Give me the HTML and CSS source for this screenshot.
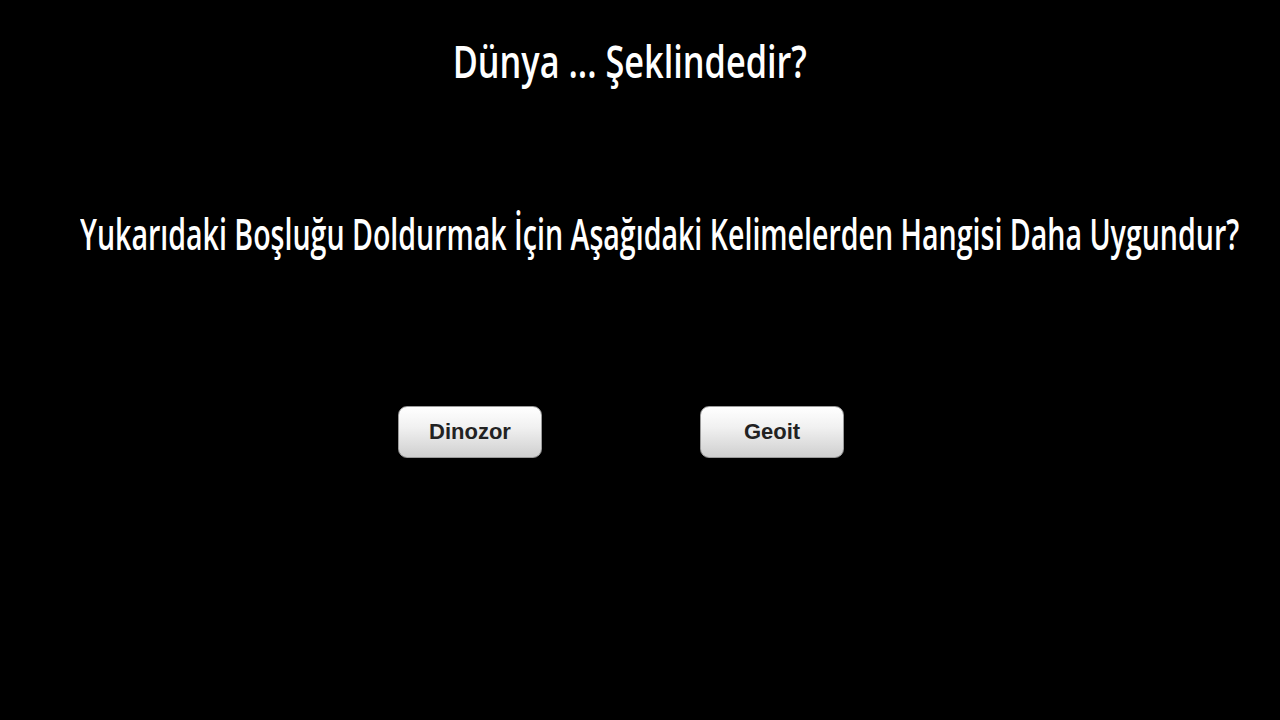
FILE: index.html
```html
<!DOCTYPE html>
<html lang="tr">
<head>
<meta charset="utf-8">
<title>Quiz</title>
<link rel="stylesheet" href="styles.css">
</head>
<body>
<main class="screen">
  <h1 class="title"><span class="title-text">Dünya ... Şeklindedir?</span></h1>
  <p class="question"><span class="question-text">Yukarıdaki Boşluğu Doldurmak İçin Aşağıdaki Kelimelerden Hangisi Daha Uygundur?</span></p>
  <div class="answers">
    <button class="answer">Dinozor</button>
    <button class="answer">Geoit</button>
  </div>
</main>
</body>
</html>
```
FILE: styles.css
```css
html, body {
  margin: 0;
  padding: 0;
  background: #000;
}
.screen {
  width: 1280px;
  height: 720px;
  display: flex;
  flex-direction: column;
  color: #fff;
  overflow: hidden;
}
.title {
  margin: 0;
  padding-top: 30px;
  height: 60px;
  display: flex;
  justify-content: center;
  padding-right: 21px;
  font-family: "Open Sans", sans-serif;
  font-weight: 600;
  font-size: 46px;
  line-height: 60px;
}
.title-text {
  display: inline-block;
  transform: scaleX(0.745);
  transform-origin: center;
  white-space: nowrap;
}
.question {
  margin: 0;
  margin-top: 113px;
  height: 60px;
  padding-left: 80px;
  font-family: "Open Sans", sans-serif;
  font-weight: 600;
  font-size: 44px;
  line-height: 60px;
  white-space: nowrap;
}
.question-text {
  display: inline-block;
  transform: scaleX(0.649);
  transform-origin: left center;
}
.answers {
  margin-top: 143px;
  display: flex;
  gap: 158px;
  padding-left: 398px;
}
.answer {
  width: 144px;
  height: 52px;
  border: 1px solid #9a9a9a;
  border-radius: 9px;
  background: linear-gradient(to bottom, #ffffff 0%, #f1f1f1 40%, #cfcfcf 100%);
  font-family: "Liberation Sans", Arial, sans-serif;
  font-weight: bold;
  font-size: 22px;
  color: #222;
  padding: 0;
}
```
